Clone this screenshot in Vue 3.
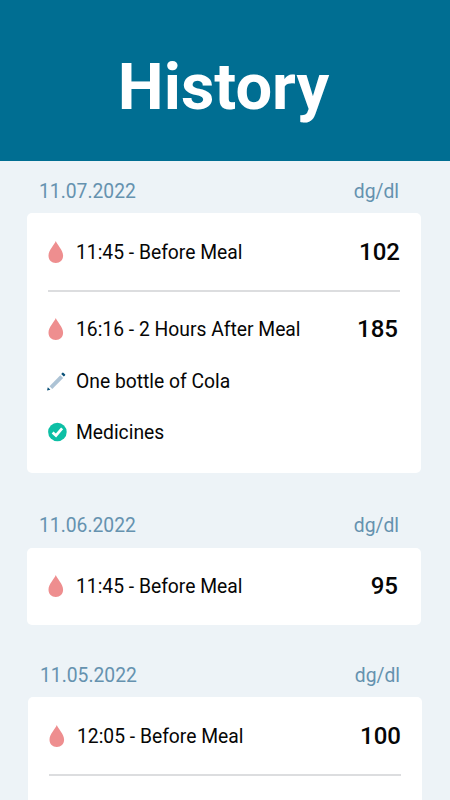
<script setup>
const days = [
  {
    date: '11.07.2022',
    entries: [
      { label: '11:45 - Before Meal', value: 102 },
      {
        label: '16:16 - 2 Hours After Meal',
        value: 185,
        inset: true,
        notes: [
          { kind: 'pencil', text: 'One bottle of Cola' },
          { kind: 'check', text: 'Medicines' },
        ],
      },
    ],
  },
  { date: '11.06.2022', compact: true, entries: [{ label: '11:45 - Before Meal', value: 95, inset: true }] },
  { date: '11.05.2022', shifted: true, more: true, entries: [{ label: '12:05 - Before Meal', value: 100 }] },
]
</script>

<template>
  <div class="screen">
    <header class="header"><h1 class="title">History</h1></header>
    <main>
      <section
        v-for="day in days"
        :key="day.date"
        class="day"
        :class="{ shifted: day.shifted, compact: day.compact }"
      >
        <div class="day-head">
          <span>{{ day.date }}</span>
          <span>dg/dl</span>
        </div>
        <div class="card" :class="{ open: day.more }">
          <div v-for="entry in day.entries" :key="entry.label" class="entry">
            <div class="row">
              <svg class="icon" viewBox="0 0 20 24">
                <path d="M7.8 1.1C9.1 4.9 15.1 10.2 15.1 15.7C15.1 20 12 22.9 7.8 22.9S.5 20 .5 15.7C.5 10.2 6.5 4.9 7.8 1.1Z" fill="#ee8e8f" />
              </svg>
              <span class="label">{{ entry.label }}</span>
              <span class="value" :class="{ inset: entry.inset }">{{ entry.value }}</span>
            </div>
            <div v-for="note in entry.notes" :key="note.text" class="row">
              <svg v-if="note.kind === 'pencil'" class="icon" viewBox="0 0 20 24">
                <path d="M1.5 17.2L12.3 6.3L15.2 9.1L4.3 20Z" fill="#adc3d5" />
                <path d="M13.2 4.9L14.4 3.8Q15 3.3 15.6 3.9L17 5.3Q17.6 5.9 17 6.5L15.8 7.6Z" fill="#0c5279" />
                <path d="M-.2 18.2L2.4 20.7L-1 21.5Z" fill="#0c5279" />
              </svg>
              <svg v-else class="icon" viewBox="0 0 20 24">
                <circle cx="9.4" cy="12" r="9.3" fill="#0dbfa5" />
                <path d="M4.6 12.4L8 15.5L14.1 8.4" fill="none" stroke="#fff" stroke-width="2.7" />
              </svg>
              <span class="label">{{ note.text }}</span>
            </div>
          </div>
        </div>
      </section>
    </main>
  </div>
</template>

<style>
body {
  margin: 0;
  background: #edf3f7;
}
</style>

<style scoped>
.screen {
  width: 450px;
  height: 800px;
  overflow: hidden;
  background: #edf3f7;
  color: #060606;
  font-family: Roboto, sans-serif;
  font-size: 19.3px;
}
.header {
  box-sizing: border-box;
  height: 161px;
  padding: 12.4px 3px 0 0;
  display: flex;
  align-items: center;
  justify-content: center;
  background: #006e92;
}
.title {
  margin: 0;
  color: #fff;
  font-size: 65px;
  font-weight: 700;
  line-height: 80px;
}
.day {
  width: 394px;
  margin-left: 27px;
  padding-bottom: 22.5px;
}
.day.compact {
  padding-bottom: 20.5px;
}
.day.shifted {
  margin-left: 28px;
}
.day-head {
  box-sizing: border-box;
  height: 52px;
  padding: 18.6px 22px 0 12px;
  display: flex;
  justify-content: space-between;
  line-height: 24px;
  color: #6592af;
}
.card {
  padding: 0 21px;
  border-radius: 5px;
  background: #fff;
}
.card.open {
  height: 140px;
}
.entry {
  padding: 13px 0 12.5px;
}
.entry + .entry {
  border-top: 2px solid #dcdddf;
  padding: 11.5px 0 15px;
}
.card.open .entry {
  border-bottom: 2px solid #dcdddf;
}
.row {
  height: 51.5px;
  display: flex;
  align-items: center;
}
.icon {
  width: 20px;
  height: 24px;
  margin-right: 8px;
  flex: none;
  overflow: visible;
}
.label {
  flex: 1;
  padding-top: 1.6px;
  line-height: 24px;
  white-space: nowrap;
}
.value {
  font-size: 24px;
  font-weight: 500;
  line-height: 28px;
}
.value.inset {
  padding-right: 2px;
}
</style>
